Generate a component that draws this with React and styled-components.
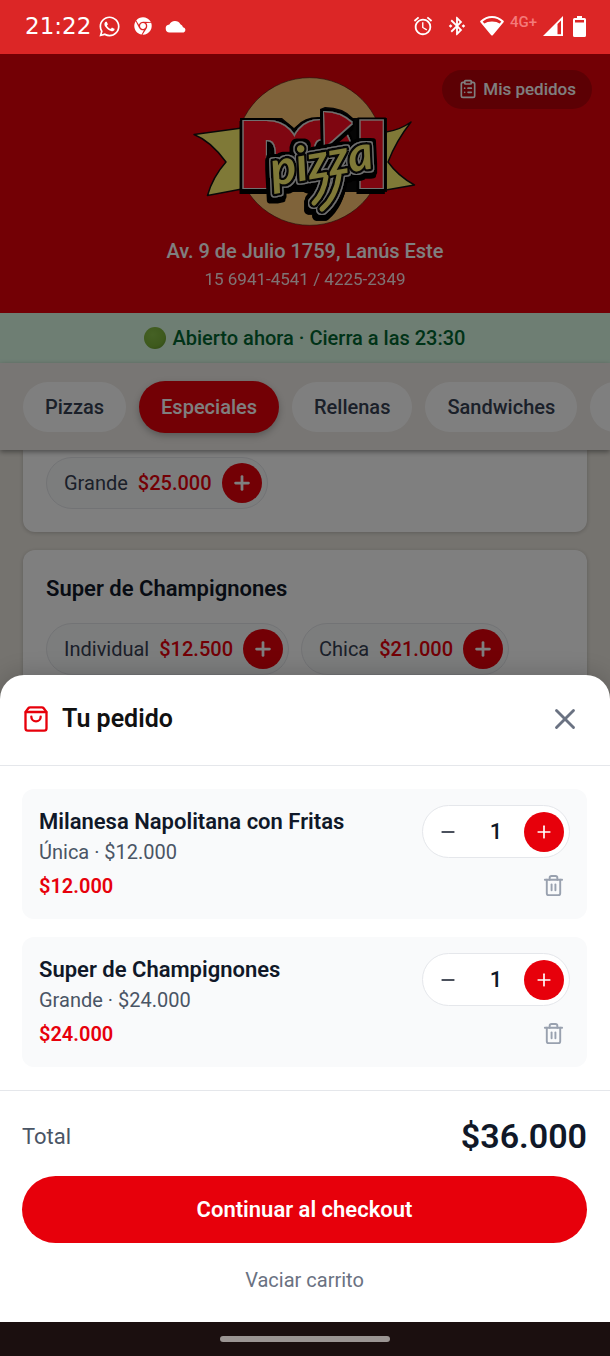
import React from "react";
import styled, { createGlobalStyle, css } from "styled-components";
import { ClipboardList, Minus, Plus, ShoppingBag, Trash2, X } from "lucide-react";
import { FaChrome, FaWhatsapp } from "react-icons/fa";
import { MdAccessAlarm, MdBluetoothConnected } from "react-icons/md";

const RED = "#e7000b";

const GlobalStyle = createGlobalStyle`
  *, *::before, *::after { box-sizing: border-box; }
  html, body { margin: 0; }
  body {
    background: #1b0f0f;
    font-family: Roboto, "Liberation Sans", sans-serif;
    font-size: 20px;
    line-height: 28px;
    color: #101828;
  }
  h1, h2, h3, p, ul { margin: 0; padding: 0; }
  ul { list-style: none; }
  button { font: inherit; color: inherit; border: 0; padding: 0; background: none; cursor: pointer; }
  svg { display: block; flex-shrink: 0; }
`;

const Page = styled.div`
  display: flex;
  flex-direction: column;
  min-height: 100vh;
`;

const StatusBar = styled.div`
  display: flex;
  align-items: center;
  justify-content: space-between;
  height: 54px;
  padding: 0 24px 2px 25px;
  background: #dc2626;
  color: #fff;
`;

const StatusGroup = styled.div`
  display: flex;
  align-items: center;
  gap: ${(p) => p.$gap}px;
`;

const Clock = styled.time`
  font-family: "DejaVu Sans", sans-serif;
  font-size: 23px;
`;

const NetworkLabel = styled.span`
  padding-bottom: 8px;
  font-size: 15px;
  line-height: 20px;
  font-weight: 500;
  color: #f47a7a;
`;

const Viewport = styled.main`
  position: relative;
  flex: 1;
  display: flex;
  flex-direction: column;
  overflow: hidden;
  background: #ebe7df;
`;

const Backdrop = styled.div`
  position: absolute;
  inset: 0;
  background: rgba(0, 0, 0, 0.5);
`;

const ShopHeader = styled.header`
  position: relative;
  display: flex;
  flex-direction: column;
  align-items: center;
  padding: 22px 18px 20px;
  background: ${RED};
  color: #fff;
`;

const OrdersButton = styled.button`
  position: absolute;
  top: 16px;
  right: 18px;
  display: flex;
  align-items: center;
  gap: 5px;
  height: 39px;
  padding: 0 16px 2px;
  border-radius: 20px;
  background: rgba(0, 0, 0, 0.2);
  font-size: 17px;
  font-weight: 500;
`;

const Address = styled.p`
  margin-top: 9px;
  font-weight: 500;
`;

const Phone = styled.p`
  font-size: 17px;
  opacity: 0.9;
`;

const OpenBanner = styled.div`
  display: flex;
  align-items: center;
  justify-content: center;
  gap: 6px;
  height: 50px;
  background: #dcfce7;
  color: #016630;
  font-weight: 500;
`;

const TabsShadow = styled.div`
  position: relative;
  box-shadow: 0 2px 5px rgba(0, 0, 0, 0.4);
`;

const Tabs = styled.nav`
  display: flex;
  align-items: center;
  gap: 13px;
  height: 87px;
  padding: 0 23px;
  overflow: hidden;
  background: #f0ece8;
`;

const Tab = styled.button`
  flex-shrink: 0;
  min-width: 100px;
  height: 50px;
  padding: 0 22px;
  border-radius: 26px;
  background: #fff;
  color: #364153;
  font-weight: 500;
  ${(p) =>
    p.$active &&
    css`
      height: 52px;
      background: ${RED};
      color: #fff;
      box-shadow: 0 3px 7px rgba(0, 0, 0, 0.25);
    `}
`;

const Products = styled.div`
  display: flex;
  flex-direction: column;
  gap: 18px;
  padding: 0 23px;
`;

const ProductCard = styled.article`
  padding: ${(p) => (p.$scrolled ? "7px" : "23px")} 23px 23px;
  border-radius: ${(p) => (p.$scrolled ? "0 0 12px 12px" : "12px")};
  background: #fff;
  box-shadow: 0 1px 4px rgba(0, 0, 0, 0.2);
`;

const ProductName = styled.h3`
  margin-bottom: 18px;
  font-size: 22px;
  line-height: 32px;
  font-weight: 600;
`;

const Options = styled.div`
  display: flex;
  flex-wrap: wrap;
  gap: 12px;
`;

const Option = styled.div`
  display: flex;
  align-items: center;
  gap: 10px;
  height: 52px;
  padding: 0 5px 0 17px;
  border: 1px solid #e5e7eb;
  border-radius: 26px;
  background: #f9fafb;
  color: #364153;
`;

const OptionPrice = styled.span`
  color: ${RED};
  font-weight: 500;
`;

const RoundButton = styled.button`
  display: flex;
  align-items: center;
  justify-content: center;
  width: 40px;
  height: 40px;
  border-radius: 50%;
  ${(p) =>
    p.$filled &&
    css`
      background: ${RED};
      color: #fff;
    `}
`;

const Sheet = styled.section`
  position: absolute;
  left: 0;
  right: 0;
  bottom: 0;
  border-radius: 24px 24px 0 0;
  background: #fff;
  box-shadow: 0 0 24px rgba(0, 0, 0, 0.2);
`;

const SheetHeader = styled.header`
  display: flex;
  align-items: center;
  gap: 12px;
  height: 91px;
  padding: 0 22px 2px;
  border-bottom: 1px solid #e5e7eb;
`;

const SheetTitle = styled.h2`
  flex: 1;
  font-size: 25px;
  line-height: 34px;
  font-weight: 600;
  color: #111;
`;

const CloseButton = styled.button`
  display: flex;
  padding: 6px;
  color: #6a7282;
`;

const CartList = styled.ul`
  display: flex;
  flex-direction: column;
  gap: 18px;
  padding: 23px 23px 23px 22px;
`;

const CartItem = styled.li`
  display: flex;
  justify-content: space-between;
  gap: 12px;
  padding: 16px 17px 18px;
  border-radius: 12px;
  background: #f9fafb;
`;

const ItemName = styled.h3`
  font-size: 22px;
  line-height: 33px;
  font-weight: 600;
`;

const ItemDetail = styled.p`
  color: #4a5565;
`;

const ItemPrice = styled.p`
  margin-top: 6px;
  color: ${RED};
  font-weight: 600;
`;

const ItemActions = styled.div`
  display: flex;
  flex-direction: column;
  align-items: flex-end;
  gap: 12px;
`;

const Stepper = styled.div`
  display: flex;
  align-items: center;
  height: 53px;
  padding: 0 5px;
  border: 1px solid #e5e7eb;
  border-radius: 27px;
  background: #fff;
`;

const Quantity = styled.span`
  width: 56px;
  text-align: center;
  font-size: 22px;
  font-weight: 500;
`;

const TrashButton = styled.button`
  display: flex;
  align-items: center;
  justify-content: center;
  width: 33px;
  height: 31px;
  color: #99a1af;
`;

const SheetFooter = styled.footer`
  display: flex;
  flex-direction: column;
  padding: 23px 23px 17px 22px;
  border-top: 1px solid #e5e7eb;
`;

const TotalRow = styled.div`
  display: flex;
  align-items: center;
  justify-content: space-between;
  margin-bottom: 17px;
  font-size: 22px;
  color: #4a5565;
`;

const TotalAmount = styled.strong`
  font-size: 34px;
  line-height: 45px;
  font-weight: 600;
  color: #101828;
`;

const CheckoutButton = styled.button`
  height: 67px;
  border-radius: 34px;
  background: ${RED};
  color: #fff;
  font-size: 22px;
  font-weight: 600;
`;

const ClearButton = styled.button`
  margin-top: 12px;
  height: 50px;
  color: #6a7282;
`;

const GestureBar = styled.div`
  display: flex;
  align-items: center;
  justify-content: center;
  height: 34px;
  background: #1b0f0f;
`;

const GestureHandle = styled.div`
  width: 170px;
  height: 6px;
  border-radius: 3px;
  background: #9b9593;
`;

function CloudIcon() {
  return (
    <svg width="22" height="13" viewBox="0 0 22 13" fill="currentColor">
      <path d="M5 12.5a4 4 0 0 1-.6-8A6.2 6.2 0 0 1 15.400 4.200 4.200 4.200 0 0 1 18 7.300a2.700 2.700 0 0 1 .7 5.200z" />
    </svg>
  );
}

function WifiIcon() {
  return (
    <svg width="24" height="20" viewBox="0 0 24 20" fill="none">
      <path d="M1.200 5.500C7.500-.5 16.500-.5 22.800 5.500L12 18.500z" stroke="currentColor" strokeWidth="2" strokeLinejoin="round" />
      <path d="M3.500 8C8.500 4.700 15.500 4.700 20.500 8L12 18.500z" fill="currentColor" />
    </svg>
  );
}

function SignalIcon() {
  return (
    <svg width="20" height="20" viewBox="0 0 20 20" fill="currentColor">
      <path fillRule="evenodd" d="M0 20 20 0V20zM14.500 8v10.200H18V4.600z" />
    </svg>
  );
}

function BatteryIcon() {
  return (
    <svg width="13" height="21" viewBox="0 0 13 21" fill="currentColor">
      <path fillRule="evenodd" d="M4 0h5v2h2.500A1.500 1.500 0 0 1 13 3.500v16a1.500 1.500 0 0 1-1.500 1.500h-10A1.500 1.500 0 0 1 0 19.500v-16A1.500 1.500 0 0 1 1.500 2H4zM2 4v2.500h9V4z" />
    </svg>
  );
}

function OpenDot() {
  return (
    <svg width="22" height="22" viewBox="0 0 22 22">
      <defs>
        <radialGradient id="open-dot" cx="40%" cy="35%" r="75%">
          <stop offset="0" stopColor="#8bc34a" />
          <stop offset="0.7" stopColor="#7cb33a" />
          <stop offset="1" stopColor="#659a2c" />
        </radialGradient>
      </defs>
      <circle cx="11" cy="11" r="11" fill="url(#open-dot)" />
    </svg>
  );
}

/* Dilates the artwork twice to build the light and the dark outline around it. */
function OutlineFilter({ id, inner, outer, drop }) {
  return (
    <filter id={id} x="-20%" y="-40%" width="140%" height="180%">
      <feMorphology in="SourceAlpha" operator="dilate" radius={inner} result="innerShape" />
      <feFlood floodColor="#e0e0e0" />
      <feComposite in2="innerShape" operator="in" result="light" />
      <feMorphology in="SourceAlpha" operator="dilate" radius={outer} result="outerShape" />
      <feOffset in="outerShape" dx="-1" dy={drop} result="dropShape" />
      <feMerge>
        <feMergeNode in="dropShape" />
        <feMergeNode in="outerShape" />
        <feMergeNode in="light" />
        <feMergeNode in="SourceGraphic" />
      </feMerge>
    </filter>
  );
}

function Logo() {
  return (
    <svg width="226" height="152" viewBox="12 11 226 152" role="img" aria-label="DOI Pizza">
      <defs>
        <OutlineFilter id="logo-block" inner="1" outer="3" drop="3" />
        <OutlineFilter id="logo-script" inner="1" outer="4" drop="3" />
      </defs>
      <circle cx="129.700" cy="86.500" r="73.800" fill="#ffc775" stroke="#3a1a10" strokeWidth=".6" />
      <g fill="#fff36e" stroke="#111" strokeWidth="1.500" strokeLinejoin="round">
        <path d="M14 69.500 62 63v61l-34.500 6.500C31 118 38 106 46 97 38 86 28 75 14 69.500z" />
        <path d="M206 67Q220 65 231 57 216 76 208 97q10 14 26.500 23L206 125z" />
      </g>
      <path d="M60 53h42l12 10q10-9 26-8V44l5-2q18 0 28 11h34v74H60z" fill="#0a0a0a" />
      <g
        filter="url(#logo-block)"
        fill="#ff0a24"
        stroke="#ff0a24"
        strokeWidth="8"
        fontFamily="Roboto, sans-serif"
        fontWeight="900"
        fontSize="84"
      >
        <text x="63" y="119">D</text>
        <text x="112" y="119">O</text>
        <text x="179" y="119">I</text>
      </g>
      <g filter="url(#logo-block)" fill="#ff0a24">
        <path d="M144 47q16 0 28 11l-27 24z" />
      </g>
      <g filter="url(#logo-script)">
        <path
          d="M146 112q-2 16-12 26M159 110q-3 22-17 34"
          fill="none"
          stroke="#0a0a0a"
          strokeWidth="10"
          strokeLinecap="round"
        />
        <text
          x="93"
          y="121"
          transform="rotate(-10 93 121)"
          fontFamily="Lato, sans-serif"
          fontStyle="italic"
          fontWeight="700"
          fontSize="48"
          fill="#fff36e"
          stroke="#0a0a0a"
          strokeWidth="5"
          strokeLinejoin="round"
          paintOrder="stroke"
        >
          pizza
        </text>
        <path
          d="M146 112q-2 16-12 26M159 110q-3 22-17 34"
          fill="none"
          stroke="#fff36e"
          strokeWidth="5"
          strokeLinecap="round"
        />
      </g>
    </svg>
  );
}

function PriceOption({ label, price }) {
  return (
    <Option>
      <span>{label}</span>
      <OptionPrice>{price}</OptionPrice>
      <RoundButton $filled aria-label={`Agregar ${label}`}>
        <Plus size={22} strokeWidth={3} />
      </RoundButton>
    </Option>
  );
}

function CartRow({ name, detail, price }) {
  return (
    <CartItem>
      <div>
        <ItemName>{name}</ItemName>
        <ItemDetail>{detail}</ItemDetail>
        <ItemPrice>{price}</ItemPrice>
      </div>
      <ItemActions>
        <Stepper>
          <RoundButton aria-label="Quitar uno">
            <Minus size={20} strokeWidth={2} />
          </RoundButton>
          <Quantity>1</Quantity>
          <RoundButton $filled aria-label="Agregar uno">
            <Plus size={20} strokeWidth={2} />
          </RoundButton>
        </Stepper>
        <TrashButton aria-label={`Eliminar ${name}`}>
          <Trash2 size={23} strokeWidth={2} />
        </TrashButton>
      </ItemActions>
    </CartItem>
  );
}

const CATEGORIES = ["Pizzas", "Especiales", "Rellenas", "Sandwiches"];

export default function App() {
  return (
    <Page>
      <GlobalStyle />
      <StatusBar>
        <StatusGroup $gap={13}>
          <StatusGroup $gap={7}>
            <Clock>21:22</Clock>
            <FaWhatsapp size={23} />
          </StatusGroup>
          <FaChrome size={18} />
          <CloudIcon />
        </StatusGroup>
        <StatusGroup $gap={6}>
          <StatusGroup $gap={12}>
            <MdAccessAlarm size={22} />
            <MdBluetoothConnected size={22} />
            <WifiIcon />
          </StatusGroup>
          <NetworkLabel>4G+</NetworkLabel>
          <StatusGroup $gap={10}>
            <SignalIcon />
            <BatteryIcon />
          </StatusGroup>
        </StatusGroup>
      </StatusBar>

      <Viewport>
        <ShopHeader>
          <OrdersButton>
            <ClipboardList size={20} strokeWidth={2} />
            Mis pedidos
          </OrdersButton>
          <Logo />
          <Address>Av. 9 de Julio 1759, Lanús Este</Address>
          <Phone>15 6941-4541 / 4225-2349</Phone>
        </ShopHeader>
        <OpenBanner>
          <OpenDot />
          Abierto ahora · Cierra a las 23:30
        </OpenBanner>
        <TabsShadow>
          <Tabs>
            {CATEGORIES.map((name) => (
              <Tab key={name} $active={name === "Especiales"}>
                {name}
              </Tab>
            ))}
            <Tab aria-label="Más categorías" />
          </Tabs>
        </TabsShadow>
        <Products>
          <ProductCard $scrolled>
            <Options>
              <PriceOption label="Grande" price="$25.000" />
            </Options>
          </ProductCard>
          <ProductCard>
            <ProductName>Super de Champignones</ProductName>
            <Options>
              <PriceOption label="Individual" price="$12.500" />
              <PriceOption label="Chica" price="$21.000" />
            </Options>
          </ProductCard>
        </Products>

        <Backdrop />

        <Sheet role="dialog" aria-labelledby="cart-title">
          <SheetHeader>
            <ShoppingBag size={28} color={RED} />
            <SheetTitle id="cart-title">Tu pedido</SheetTitle>
            <CloseButton aria-label="Cerrar">
              <X size={34} strokeWidth={2} />
            </CloseButton>
          </SheetHeader>
          <CartList>
            <CartRow name="Milanesa Napolitana con Fritas" detail="Única · $12.000" price="$12.000" />
            <CartRow name="Super de Champignones" detail="Grande · $24.000" price="$24.000" />
          </CartList>
          <SheetFooter>
            <TotalRow>
              <span>Total</span>
              <TotalAmount>$36.000</TotalAmount>
            </TotalRow>
            <CheckoutButton>Continuar al checkout</CheckoutButton>
            <ClearButton>Vaciar carrito</ClearButton>
          </SheetFooter>
        </Sheet>
      </Viewport>

      <GestureBar>
        <GestureHandle />
      </GestureBar>
    </Page>
  );
}
